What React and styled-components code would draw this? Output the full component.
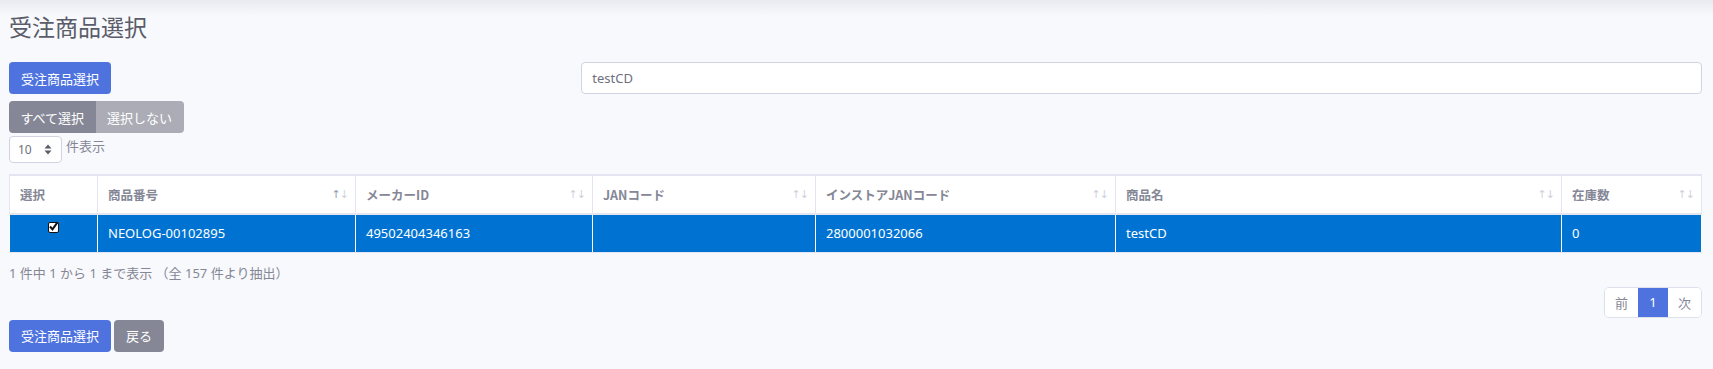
import React from "react";
import styled, { createGlobalStyle } from "styled-components";

const GlobalStyle = createGlobalStyle`
  body {
    margin: 0;
    background: linear-gradient(#e9eaef 0px, #f8f9fc 16px) no-repeat, #f8f9fc;
    font-family: "Noto Sans", "Noto Sans CJK JP", sans-serif;
    color: #858796;
  }
`;

const columns = [
  { key: "select", label: "選択", width: 88, sort: null },
  { key: "code", label: "商品番号", width: 258, sort: "asc" },
  { key: "maker", label: "メーカーID", width: 237, sort: "none" },
  { key: "jan", label: "JANコード", width: 223, sort: "none" },
  { key: "instore", label: "インストアJANコード", width: 300, sort: "none" },
  { key: "name", label: "商品名", width: 446, sort: "none" },
  { key: "stock", label: "在庫数", width: null, sort: "none" },
];

const rows = [
  {
    id: 1,
    checked: true,
    code: "NEOLOG-00102895",
    maker: "49502404346163",
    jan: "",
    instore: "2800001032066",
    name: "testCD",
    stock: "0",
  },
];

const App = () => {
  return (
    <Page>
      <GlobalStyle />
      <Title>受注商品選択</Title>
      <TopRow>
        <div>
          <Button>受注商品選択</Button>
        </div>
        <SearchInput defaultValue="testCD" />
      </TopRow>
      <ButtonGroup>
        <GroupButton>すべて選択</GroupButton>
        <GroupButton light>選択しない</GroupButton>
      </ButtonGroup>
      <LengthRow>
        <LengthSelect>
          <span>10</span>
          <svg width="8" height="11" viewBox="0 0 8 11">
            <path d="M4 0.5 L7.5 4.5 H0.5 Z" fill="#5a5c69" />
            <path d="M4 10.5 L7.5 6.5 H0.5 Z" fill="#5a5c69" />
          </svg>
        </LengthSelect>
        <LengthLabel>件表示</LengthLabel>
      </LengthRow>
      <Table>
        <colgroup>
          {columns.map((c) => (
            <col key={c.key} style={c.width ? { width: c.width } : undefined} />
          ))}
        </colgroup>
        <thead>
          <tr>
            {columns.map((c) => (
              <Th key={c.key}>
                <HeadInner>
                  <span>{c.label}</span>
                  {c.sort && (
                    <SortIcon>
                      <Arrow active={c.sort === "asc"}>↑</Arrow>
                      <Arrow>↓</Arrow>
                    </SortIcon>
                  )}
                </HeadInner>
              </Th>
            ))}
          </tr>
        </thead>
        <tbody>
          {rows.map((r) => (
            <SelectedRow key={r.id}>
              <CheckCell>
                <CheckBox>
                  {r.checked && (
                    <svg width="11" height="11" viewBox="0 0 11 11">
                      <path
                        d="M2 5.5 L4.5 8.3 L9.6 1.2"
                        stroke="#111"
                        strokeWidth="2"
                        fill="none"
                      />
                    </svg>
                  )}
                </CheckBox>
              </CheckCell>
              <Td>{r.code}</Td>
              <Td>{r.maker}</Td>
              <Td>{r.jan}</Td>
              <Td>{r.instore}</Td>
              <Td>{r.name}</Td>
              <Td>{r.stock}</Td>
            </SelectedRow>
          ))}
        </tbody>
      </Table>
      <Info>1 件中 1 から 1 まで表示 （全 157 件より抽出）</Info>
      <PagerRow>
        <Pager>
          <PageItem>前</PageItem>
          <PageItem active>1</PageItem>
          <PageItem>次</PageItem>
        </Pager>
      </PagerRow>
      <Footer>
        <Button>受注商品選択</Button>
        <Button secondary>戻る</Button>
      </Footer>
    </Page>
  );
};

export default App;

const Page = styled.div`
  padding: 0 11px 20px 9px;
`;

const Title = styled.h1`
  margin: 12px 0 0;
  font-size: 23px;
  line-height: 28px;
  font-weight: 400;
  color: #5a5c69;
  font-family: "Noto Sans CJK JP", sans-serif;
`;

const TopRow = styled.div`
  display: grid;
  grid-template-columns: calc((100% + 24px) / 3 - 24px) 1fr;
  column-gap: 24px;
  margin-top: 22px;
`;

const Button = styled.button`
  height: 32px;
  padding: 0 12px;
  border: none;
  border-radius: 4px;
  background: ${(props) => (props.secondary ? "#858796" : "#4e73df")};
  color: #fff;
  font-size: 13px;
  font-family: "Noto Sans CJK JP", sans-serif;
  cursor: pointer;
`;

const SearchInput = styled.input`
  box-sizing: border-box;
  height: 32px;
  width: 100%;
  padding: 0 10px;
  border: 1px solid #d1d3e2;
  border-radius: 4px;
  background: #fff;
  color: #6e707e;
  font-size: 13px;
  font-family: "Noto Sans", sans-serif;
  outline: none;
`;

const ButtonGroup = styled.div`
  display: inline-flex;
  margin-top: 7px;
  border-radius: 4px;
  overflow: hidden;
`;

const GroupButton = styled.button`
  height: 32px;
  padding: 0 11.5px;
  border: none;
  background: ${(props) => (props.light ? "#abacb6" : "#858796")};
  color: #fff;
  font-size: 13px;
  font-family: "Noto Sans CJK JP", sans-serif;
`;

const LengthRow = styled.div`
  display: flex;
  align-items: flex-start;
  gap: 4px;
  margin-top: 3px;
`;

const LengthSelect = styled.div`
  box-sizing: border-box;
  width: 53px;
  height: 27px;
  display: flex;
  align-items: center;
  justify-content: space-between;
  padding: 0 9px 0 8px;
  border: 1px solid #d1d3e2;
  border-radius: 4px;
  background: #fff;
  color: #6e707e;
  font-size: 12px;
`;

const LengthLabel = styled.span`
  font-size: 13px;
  line-height: 20px;
  color: #858796;
  font-family: "Noto Sans CJK JP", sans-serif;
`;

const Table = styled.table`
  width: 100%;
  margin-top: 11px;
  border-collapse: collapse;
  table-layout: fixed;
  border: 1px solid #e3e6f0;
  border-top-width: 2px;
  font-size: 13px;
`;

const Th = styled.th`
  height: 37px;
  padding: 0 7px 0 10px;
  background: #fff;
  border: 1px solid #e3e6f0;
  border-bottom-width: 2px;
  text-align: left;
  font-weight: 700;
  color: #858796;
  font-family: "Noto Sans CJK JP", sans-serif;
  font-size: 12.5px;
`;

const HeadInner = styled.div`
  display: flex;
  align-items: center;
  justify-content: space-between;
`;

const SortIcon = styled.span`
  display: flex;
  font-size: 11px;
  font-weight: 400;
  font-family: "DejaVu Sans", sans-serif;
  letter-spacing: -1px;
`;

const Arrow = styled.span`
  color: ${(props) => (props.active ? "#9a9cab" : "#cfd1db")};
`;

const SelectedRow = styled.tr`
  background: #0073d2;
  color: #fff;
`;

const Td = styled.td`
  box-sizing: border-box;
  height: 38px;
  padding: 0 10px;
  border: 1px solid #fff;
  border-bottom-color: #e3e6f0;
  vertical-align: middle;
`;

const CheckCell = styled(Td)`
  vertical-align: top;
  text-align: center;
  padding-top: 7px;
  line-height: 11px;
`;

const CheckBox = styled.span`
  display: inline-block;
  box-sizing: border-box;
  width: 11px;
  height: 11px;
  border: 1px solid #111;
  border-radius: 2px;
  background: #fff;
  position: relative;
  svg {
    position: absolute;
    left: -1px;
    top: -2px;
  }
`;

const Info = styled.div`
  margin-top: 10px;
  font-size: 13px;
  line-height: 20px;
  color: #858796;
  font-family: "Noto Sans", "Noto Sans CJK JP", sans-serif;
`;

const PagerRow = styled.div`
  display: flex;
  justify-content: flex-end;
  margin-top: 4px;
`;

const Pager = styled.div`
  display: flex;
  border: 1px solid #dddfeb;
  border-radius: 5px;
  overflow: hidden;
  background: #fff;
`;

const PageItem = styled.span`
  height: 29px;
  min-width: ${(props) => (props.active ? "30px" : "33px")};
  display: flex;
  align-items: center;
  justify-content: center;
  background: ${(props) => (props.active ? "#4e73df" : "#fff")};
  color: ${(props) => (props.active ? "#fff" : "#858796")};
  font-size: 13px;
  font-family: "Noto Sans", "Noto Sans CJK JP", sans-serif;
`;

const Footer = styled.div`
  display: flex;
  gap: 3px;
  margin-top: 2px;
`;
